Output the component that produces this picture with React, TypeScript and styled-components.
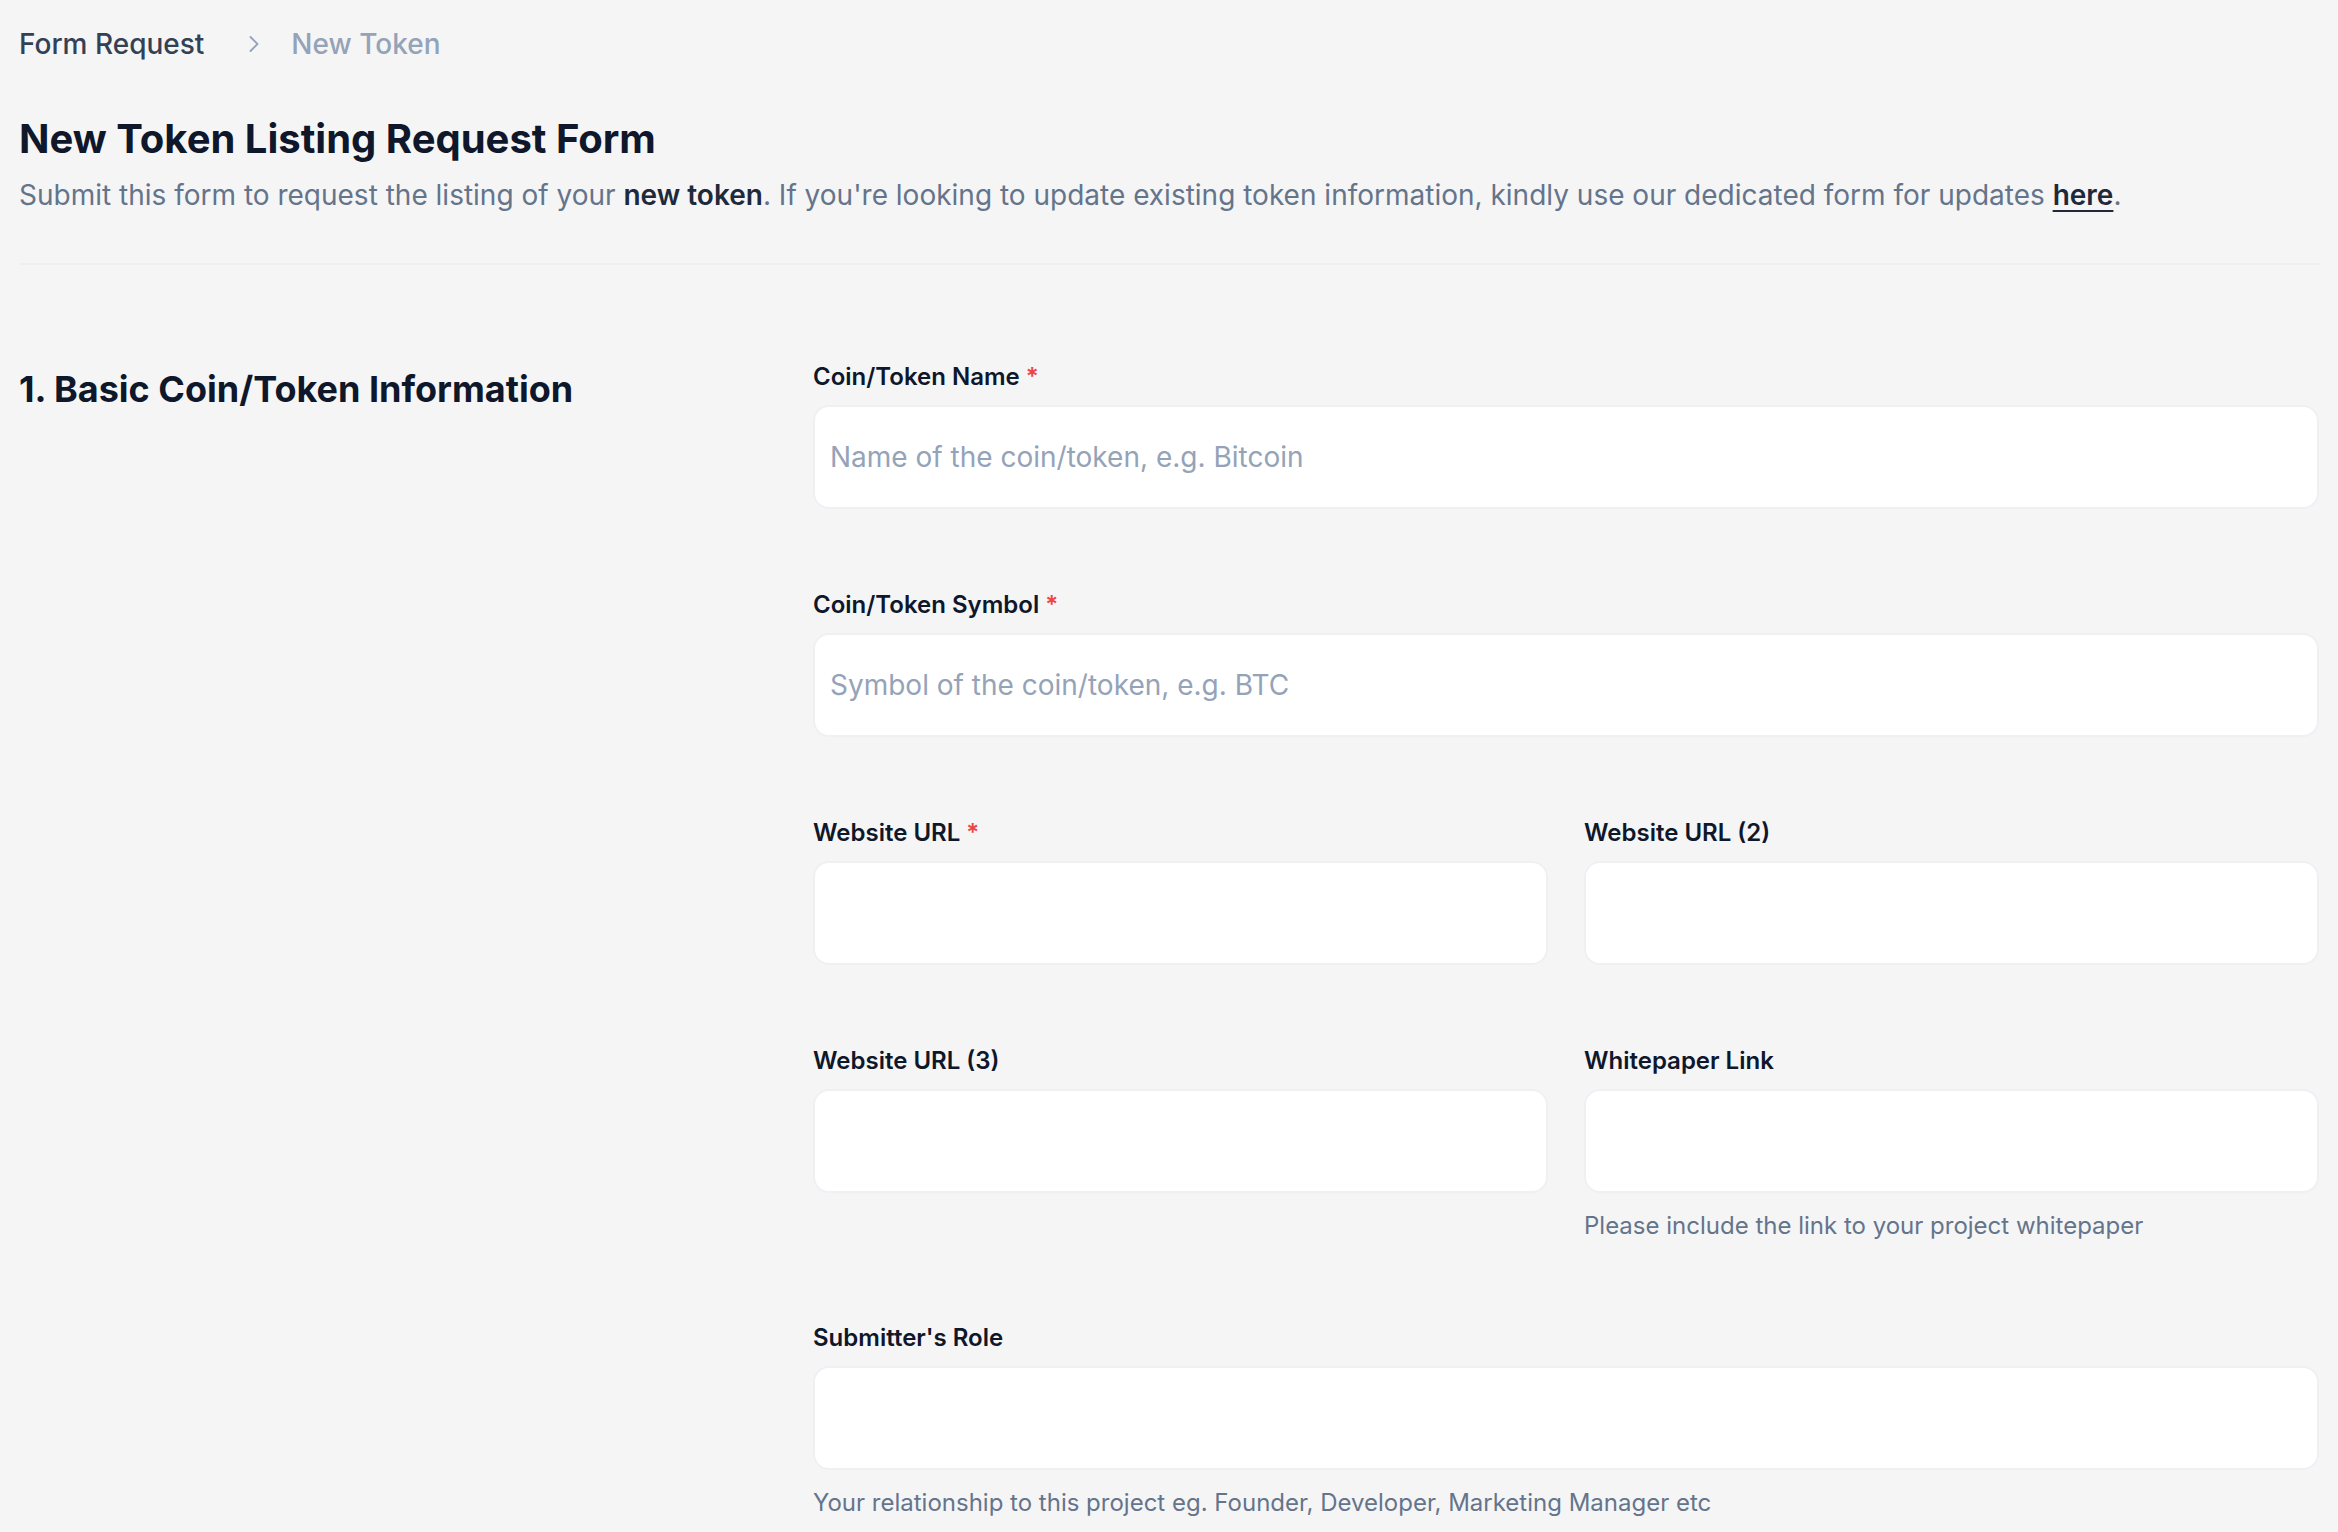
import styled, { createGlobalStyle } from "styled-components";

const GlobalStyle = createGlobalStyle`
  * { box-sizing: border-box; }
  body {
    margin: 0;
    background: #f5f5f6;
    font-family: Inter, "Noto Sans", "Liberation Sans", sans-serif;
    color: #0f172a;
  }
`;

const Page = styled.main`
  padding: 24px 19px 40px;
`;

const Breadcrumb = styled.nav`
  display: flex;
  align-items: center;
  font-size: 28px;
  line-height: 40px;
  font-weight: 500;
`;

const Crumb = styled.span<{ $current?: boolean }>`
  color: ${(p) => (p.$current ? "#94a3b8" : "#334155")};
`;

const Chevron = styled.svg`
  width: 28px;
  height: 28px;
  margin: 0 23px 0 36px;
  color: #94a3b8;
`;

const Title = styled.h1`
  margin: 48px 0 0;
  font-size: 40px;
  line-height: 54px;
  font-weight: 700;
  color: #0f172a;
`;

const Lead = styled.p`
  margin: 9px 0 0;
  font-size: 28px;
  line-height: 40px;
  color: #64748b;

  strong {
    font-weight: 600;
    color: #1e293b;
  }

  a {
    font-weight: 600;
    color: #1e293b;
    text-decoration: underline;
    text-underline-offset: 5px;
    text-decoration-thickness: 2px;
  }
`;

const Divider = styled.hr`
  margin: 48px 0 0;
  border: 0;
  border-top: 2px solid #eeeff3;
`;

const Section = styled.section`
  display: grid;
  grid-template-columns: 1fr 2fr;
  column-gap: 41px;
  padding-top: 94px;
`;

const SectionTitle = styled.h2`
  margin: 6px 0 0;
  font-size: 36px;
  line-height: 48px;
  font-weight: 700;
  color: #0f172a;
`;

const Fields = styled.div`
  display: flex;
  flex-direction: column;
  gap: 78px;
`;

const Pair = styled.div`
  display: grid;
  grid-template-columns: 1fr 1fr;
  column-gap: 36px;
  align-items: start;
`;

const Field = styled.div`
  display: flex;
  flex-direction: column;
`;

const Label = styled.label`
  font-size: 24px;
  line-height: 36px;
  font-weight: 600;
  color: #0f172a;
`;

const Required = styled.span`
  color: #ef4444;
  margin-left: 6px;
`;

const Input = styled.input`
  margin-top: 10px;
  height: 104px;
  width: 100%;
  padding: 0 15px;
  border: 2px solid #eff0f4;
  border-radius: 16px;
  background: #ffffff;
  font-family: inherit;
  font-size: 28px;
  color: #0f172a;
  outline: none;

  &::placeholder {
    color: #94a3b8;
  }
`;

const Hint = styled.p`
  margin: 16px 0 0;
  font-size: 24px;
  line-height: 33px;
  color: #64748b;
`;

type FieldProps = {
  label: string;
  required?: boolean;
  placeholder?: string;
  hint?: string;
};

function FormField({ label, required, placeholder, hint }: FieldProps) {
  return (
    <Field>
      <Label>
        {label}
        {required && <Required>*</Required>}
      </Label>
      <Input placeholder={placeholder} />
      {hint && <Hint>{hint}</Hint>}
    </Field>
  );
}

export default function App() {
  return (
    <>
      <GlobalStyle />
      <Page>
        <Breadcrumb>
          <Crumb>Form Request</Crumb>
          <Chevron viewBox="0 0 24 24" fill="none" stroke="currentColor" strokeWidth="1.6" strokeLinecap="round" strokeLinejoin="round">
            <path d="m9 18 6-6-6-6" />
          </Chevron>
          <Crumb $current>New Token</Crumb>
        </Breadcrumb>

        <Title>New Token Listing Request Form</Title>
        <Lead>
          Submit this form to request the listing of your <strong>new token</strong>. If you're looking to update existing
          token information, kindly use our dedicated form for updates <a href="#">here</a>.
        </Lead>

        <Divider />

        <Section>
          <SectionTitle>1. Basic Coin/Token Information</SectionTitle>
          <Fields>
            <FormField label="Coin/Token Name" required placeholder="Name of the coin/token, e.g. Bitcoin" />
            <FormField label="Coin/Token Symbol" required placeholder="Symbol of the coin/token, e.g. BTC" />
            <Pair>
              <FormField label="Website URL" required />
              <FormField label="Website URL (2)" />
            </Pair>
            <Pair>
              <FormField label="Website URL (3)" />
              <FormField label="Whitepaper Link" hint="Please include the link to your project whitepaper" />
            </Pair>
            <FormField
              label="Submitter's Role"
              hint="Your relationship to this project eg. Founder, Developer, Marketing Manager etc"
            />
          </Fields>
        </Section>
      </Page>
    </>
  );
}
